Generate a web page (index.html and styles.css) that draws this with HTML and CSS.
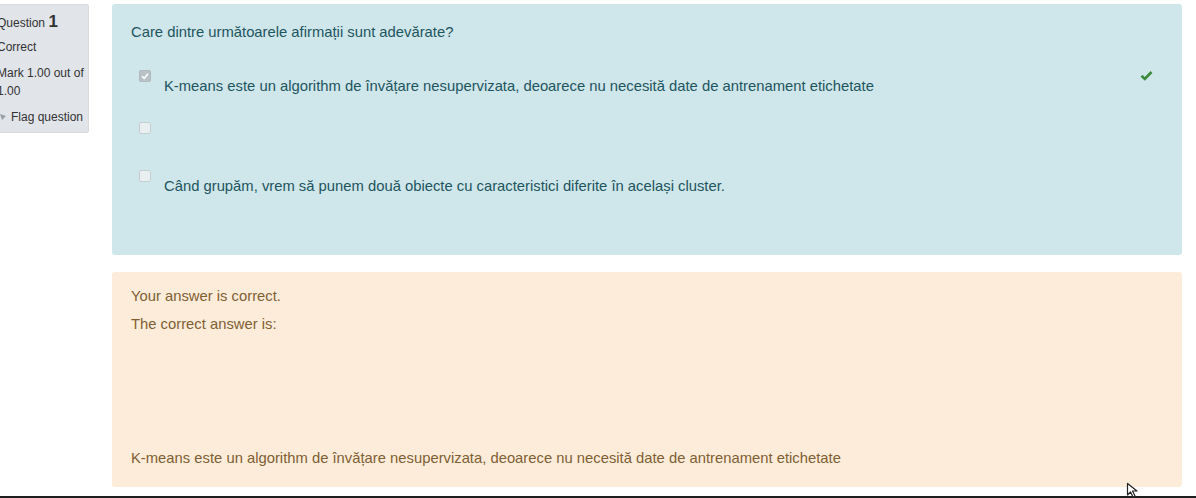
FILE: index.html
```html
<!DOCTYPE html>
<html lang="ro">
<head>
<meta charset="utf-8">
<title>Question 1</title>
<link rel="stylesheet" href="styles.css">
</head>
<body>
<div class="page">
  <aside class="info">
    <h3 class="qno">Question <span class="num">1</span></h3>
    <div class="state">Correct</div>
    <div class="grade">Mark 1.00 out of 1.00</div>
    <div class="flag">
      <svg class="flag-icon" width="8" height="8" viewBox="0 0 8 8"><path d="M1 1 L7 3 L3 7 Z" fill="#9aa0a6"/></svg>
      <span>Flag question</span>
    </div>
  </aside>
  <main class="content">
    <section class="formulation">
      <div class="qtext">Care dintre următoarele afirmații sunt adevărate?</div>
      <div class="answer">
        <div class="row">
          <span class="cb cb-checked">
            <svg width="12" height="12" viewBox="0 0 12 12"><path d="M3 6.2 L5.2 8.4 L9 3.8" fill="none" stroke="#fff" stroke-width="1.6"/></svg>
          </span>
          <span class="label">K-means este un algorithm de învățare nesupervizata, deoarece nu necesită date de antrenament etichetate</span>
          <svg class="tick" width="13" height="11" viewBox="0 0 13 11"><path d="M1.5 5.8 L4.8 9 L11.5 2" fill="none" stroke="#3a8a3a" stroke-width="2.6" stroke-linejoin="miter"/></svg>
        </div>
        <div class="row row-empty">
          <span class="cb"></span>
          <span class="label"></span>
        </div>
        <div class="row">
          <span class="cb"></span>
          <span class="label">Când grupăm, vrem să punem două obiecte cu caracteristici diferite în același cluster.</span>
        </div>
      </div>
    </section>
    <section class="outcome">
      <div class="feedback">Your answer is correct.</div>
      <div class="rightanswer">The correct answer is:</div>
      <div class="spacer"></div>
      <div class="rightanswer-text">K-means este un algorithm de învățare nesupervizata, deoarece nu necesită date de antrenament etichetate</div>
    </section>
  </main>
</div>
<div class="edge"></div>
<svg class="cursor" width="14" height="16" viewBox="0 0 14 16"><path d="M1.5 1.5 L1.5 13 L4.5 10 L7 15 L9 14 L6.5 9 L11 9 Z" fill="#fff" stroke="#222" stroke-width="1.2" stroke-linejoin="round"/></svg>
</body>
</html>
```
FILE: styles.css
```css
html, body {
  margin: 0;
  padding: 0;
  background: #ffffff;
  overflow: hidden;
}
body {
  width: 1196px;
  height: 498px;
  position: relative;
  font-family: "Liberation Sans", Arial, sans-serif;
  font-size: 14.8px;
}
.page {
  display: flex;
  align-items: flex-start;
  gap: 23px;
  padding: 4px 14px 0 0;
}
.info {
  margin-left: -10px;
  width: 99px;
  height: 129px;
  box-sizing: border-box;
  flex: none;
  background: #e1e4e9;
  border: 1px solid #d7dbe0;
  border-radius: 2px;
  padding: 8px 1px 0 6px;
  color: #333;
  font-size: 12px;
  line-height: 18px;
}
.qno {
  margin: 0;
  font-weight: normal;
  font-size: 12px;
  line-height: 18px;
}
.num {
  font-weight: bold;
  font-size: 17px;
}
.state {
  margin-top: 6px;
}
.grade {
  margin-top: 8px;
}
.flag {
  margin-top: 8px;
  display: flex;
  align-items: center;
  gap: 4px;
  margin-left: 2px;
  white-space: nowrap;
}
.flag-icon {
  flex: none;
}
.content {
  flex: 1;
  display: flex;
  flex-direction: column;
  gap: 17px;
}
.formulation {
  background: #cfe6ea;
  border-radius: 3px;
  height: 251px;
  box-sizing: border-box;
  padding: 18px 19px 0 19px;
  color: #1d5560;
}
.qtext {
  line-height: 20px;
}
.answer {
  margin-top: 22px;
  padding-left: 8px;
}
.row {
  display: flex;
  align-items: flex-start;
  min-height: 48px;
}
.cb {
  flex: none;
  width: 10px;
  height: 10px;
  margin-top: 6px;
  border: 1px solid #c5ced1;
  border-radius: 2px;
  background: #e9eef0;
  display: flex;
  align-items: center;
  justify-content: center;
}
.cb svg {
  flex: none;
}
.cb-checked {
  background: #b9c2c6;
  border-color: #b0b9bd;
}
.label {
  flex: 1;
  margin-left: 13px;
  padding-top: 12px;
  padding-bottom: 20px;
  line-height: 20px;
}
.row-empty .label {
  padding: 0;
}
.tick {
  flex: none;
  margin-top: 6px;
  margin-right: 10px;
}
.outcome {
  background: #fcecd9;
  border-radius: 3px;
  height: 215px;
  box-sizing: border-box;
  padding: 14px 19px 0 19px;
  color: #7f5f33;
  line-height: 20px;
}
.rightanswer {
  margin-top: 8px;
}
.spacer {
  height: 114px;
}
.edge {
  position: absolute;
  left: 0;
  right: 0;
  top: 496px;
  height: 2px;
  background: #1e1e1e;
}
.cursor {
  position: absolute;
  left: 1126px;
  top: 482px;
}
```
